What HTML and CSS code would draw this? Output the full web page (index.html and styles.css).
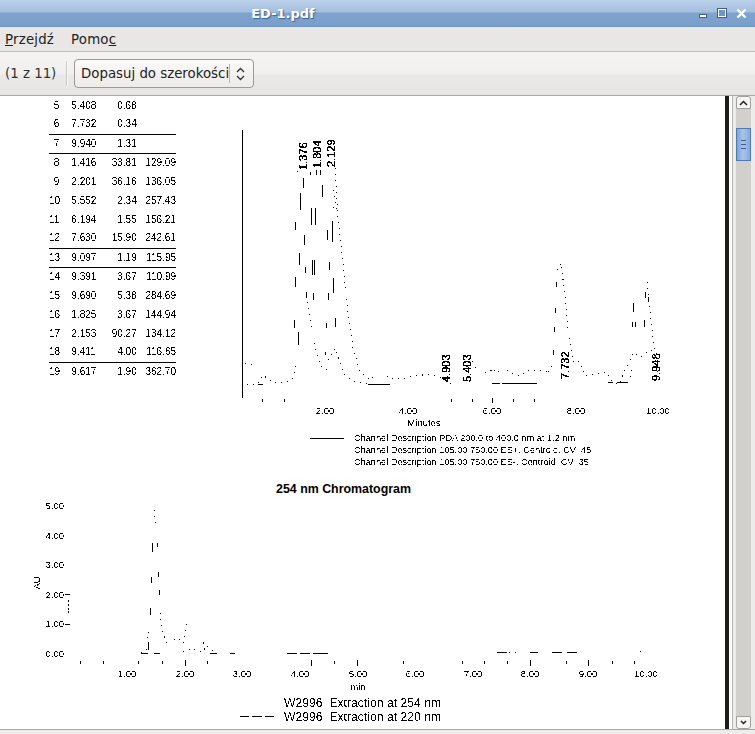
FILE: index.html
```html
<!DOCTYPE html>
<html lang="pl">
<head>
<meta charset="utf-8">
<title>ED-1.pdf</title>
<link rel="stylesheet" href="styles.css">
</head>
<body>
<svg class="defs" width="0" height="0" aria-hidden="true">
  <filter id="bin" x="0" y="0" width="100%" height="100%" color-interpolation-filters="sRGB">
    <feComponentTransfer><feFuncA type="discrete" tableValues="0 0 1 1"/></feComponentTransfer>
  </filter>
  <filter id="bin-heavy" x="0" y="0" width="100%" height="100%" color-interpolation-filters="sRGB">
    <feComponentTransfer><feFuncA type="discrete" tableValues="0 1 1 1"/></feComponentTransfer>
  </filter>
</svg>
<div class="window">
  <header class="titlebar">
    <span class="title">ED-1.pdf</span>
    <div class="wm">
      <span class="wm-min"></span>
      <span class="wm-max"></span>
      <svg class="wm-close" width="11" height="11" viewBox="0 0 11 11"><path d="M1.5 1.5l8 8M9.5 1.5l-8 8"/></svg>
    </div>
  </header>
  <nav class="menubar">
    <span><u>P</u>rzejdź</span>
    <span>Pomo<u>c</u></span>
  </nav>
  <div class="toolbar">
    <span class="pages">(1 z 11)</span>
    <span class="tool-sep"></span>
    <div class="combo">
      <span class="combo-text">Dopasuj do szerokości</span>
      <span class="combo-sep"></span>
      <svg class="combo-arrows" width="9" height="14" viewBox="0 0 9 14"><path d="M1 5l3.5-3.5L8 5M1 9l3.5 3.5L8 9"/></svg>
    </div>
  </div>
  <div class="content">
    <main class="page">
      <section class="upper">
        <table class="peaks">
          <tbody>
            <tr><td>5</td><td>5.408</td><td>0.68</td><td></td></tr>
            <tr class="ruled"><td>6</td><td>7.732</td><td>0.34</td><td></td></tr>
            <tr class="ruled"><td>7</td><td>9.940</td><td>1.31</td><td></td></tr>
            <tr><td>8</td><td>1.416</td><td>33.81</td><td>129.09</td></tr>
            <tr><td>9</td><td>2.201</td><td>36.16</td><td>136.05</td></tr>
            <tr><td>10</td><td>5.552</td><td>2.34</td><td>257.43</td></tr>
            <tr><td>11</td><td>6.194</td><td>1.55</td><td>156.21</td></tr>
            <tr class="ruled"><td>12</td><td>7.630</td><td>15.90</td><td>242.61</td></tr>
            <tr class="ruled"><td>13</td><td>9.097</td><td>1.19</td><td>115.95</td></tr>
            <tr><td>14</td><td>9.391</td><td>3.67</td><td>110.99</td></tr>
            <tr><td>15</td><td>9.690</td><td>5.38</td><td>284.69</td></tr>
            <tr><td>16</td><td>1.825</td><td>3.67</td><td>144.94</td></tr>
            <tr><td>17</td><td>2.153</td><td>90.27</td><td>134.12</td></tr>
            <tr class="ruled"><td>18</td><td>9.411</td><td>4.00</td><td>116.65</td></tr>
            <tr><td>19</td><td>9.617</td><td>1.90</td><td>362.70</td></tr>
          </tbody>
        </table>
        <svg class="chart chart-top" width="460" height="380" viewBox="240 96 460 380">
          <path class="solid" d="M242.5 130V398"/>
          <path class="solid" d="M262.5 399v3M284.5 399v3M451.5 399v3M472.5 399v3M492.5 398v5M513.5 399v3M534.5 399v3"/>
          <path class="solid" d="M294.5 320v8M298.5 332v13M295.5 222v8M300.5 193v17M303.5 178v10M304.5 235v10M299.5 253v12M305.5 267v6M306.5 292v6M311.5 208v17M315.5 208v17M312.5 260v15M314.5 260v15M313.5 293v7M310.5 172v3M316.5 170v5M320.5 170v5M322.5 185v12M327.5 230v10M329.5 262v8M332.5 221v21M333.5 278v15M328.5 293v7M335.5 318v9M326.5 323v5M325.5 352v3M295.5 277v10"/>
          <path class="solid" d="M368 384.5h22M258 384.5h5M492 383.5h8M502 383.5h35M608 382.5h5M617 382.5h11"/>
          <path class="solid" d="M554.5 327v5M555.5 308v5M556.5 282v5M553.5 350v5M632.5 322v5M633.5 303v9M635.5 322v5M644.5 320v7M645.5 292v6M648.5 297v5"/>
          <path class="dots" d="M245 363L252 365M247 385L258 384L263 375L272 382L285 383L293 378L296 362M297 172L301 160"/>
          <path class="dots" d="M335 168L338 218L343 262L348 315L353 348L360 372L370 380L378 372L390 378L405 378L415 376L430 374L442 378L452 384"/>
          <path class="dots" d="M307 302L313 338L320 365L327 370M328 360L335 348L345 375L355 382L368 384"/>
          <path class="dots" d="M333 190L337 210L331 205L328 200"/>
          <path class="dots" d="M470 356L476 368L481 372L490 372L493 368L497 373L503 367L510 372L518 376L530 370L540 370L548 372"/>
          <path class="dots" d="M548 372L553 365M557 270L561 263L565 296L568 333L571 349L573 362L577 360L580 362L585 376L598 374L606 372L612 382L620 384L625 370L634 352L640 357L650 350L660 356"/>
          <path class="dots" d="M647 282L651 320L655 357L658 373L655 380M630 377L632 370"/>
          <g class="rot-labels">
            <text transform="translate(307 170) rotate(-90)">1.376</text>
            <text transform="translate(321 168) rotate(-90)">1.804</text>
            <text transform="translate(335 167) rotate(-90)">2.129</text>
            <text transform="translate(450 382) rotate(-90)">4.903</text>
            <text transform="translate(471 382) rotate(-90)">5.403</text>
            <text transform="translate(569 379) rotate(-90)">7.732</text>
            <text transform="translate(660 381) rotate(-90)">9.948</text>
          </g>
          <g class="axis-labels">
            <text x="325" y="414">2.00</text>
            <text x="408" y="414">4.00</text>
            <text x="492" y="414">6.00</text>
            <text x="576" y="414">8.00</text>
            <text x="658" y="414">10.00</text>
            <text x="424" y="426">Minutes</text>
          </g>
          <path class="solid" d="M310 438.5h34"/>
          <g class="legend-small">
            <text x="354" y="441">Channel Description PDA 200.0 to 400.0 nm at 1.2 nm</text>
            <text x="354" y="453">Channel Description 105.00 750.00 ES+, Centroid, CV  45</text>
            <text x="354" y="465">Channel Description 105.00 750.00 ES-, Centroid, CV  35</text>
          </g>
        </svg>
      </section>
      <svg class="chart chart-bottom" width="725" height="253" viewBox="0 476 725 253">
        <text class="chart-title" x="343.5" y="493">254 nm Chromatogram</text>
        <g class="y-labels">
          <text x="64" y="509">5.00</text>
          <text x="64" y="539">4.00</text>
          <text x="64" y="568">3.00</text>
          <text x="64" y="598">2.00</text>
          <text x="64" y="627">1.00</text>
          <text x="64" y="657">0.00</text>
        </g>
        <text class="au" transform="translate(40 583) rotate(-90)">AU</text>
        <path class="solid" d="M65 594.5h5M65 624.5h5M68.5 600v2M68.5 604v2M68.5 608v2M68.5 611v2"/>
        <path class="solid" d="M80.5 661v3M103.5 661v3M138.5 661v3M162.5 661v3M185.5 660v6M207.5 661v3M311.5 660v6M334.5 661v3M357.5 660v6M403.5 661v3M462.5 661v3M484.5 661v3M507.5 661v3M530.5 660v6M566.5 661v3M588.5 660v6M612.5 661v3M634.5 661v3"/>
        <path class="solid" d="M141 653.5h7M154 653.5h6M210 653.5h7M230 653.5h5M287 653.5h10M300 653.5h10M313 653.5h15M497 652.5h10M530 652.5h8M552 652.5h10M567 652.5h10"/>
        <path class="solid" d="M148.5 642v8M150.5 608v7M151.5 577v6M152.5 543v9M158.5 572v5M159.5 590v5M157.5 543v4"/>
        <path class="dots" d="M141 653L146 651L149 629M154 510L156 525M160 613L163 633L167 645L172 642L176 638L180 640M183 643L186 625L188 620M183 652L192 649L200 652L205 650L202 640L208 647L215 652"/>
        <path class="dots" d="M497 652L520 652M640 652L645 650"/>
        <g class="axis-labels">
          <text x="127" y="677">1.00</text>
          <text x="185" y="677">2.00</text>
          <text x="242" y="677">3.00</text>
          <text x="300" y="677">4.00</text>
          <text x="358" y="677">5.00</text>
          <text x="415" y="677">6.00</text>
          <text x="473" y="677">7.00</text>
          <text x="530" y="677">8.00</text>
          <text x="588" y="677">9.00</text>
          <text x="646" y="677">10.00</text>
          <text x="358" y="690">min</text>
        </g>
        <g class="legend-big">
          <text x="284" y="707">W2996  Extraction at 254 nm</text>
          <text x="284" y="721">W2996  Extraction at 220 nm</text>
        </g>
        <path class="solid" d="M240 716.5h9M252 716.5h10M265 716.5h9"/>
      </svg>
    </main>
    <div class="page-edge"></div>
    <div class="scroll-gap"></div>
    <div class="scrollbar">
      <div class="sb-btn sb-up"><svg width="9" height="6" viewBox="0 0 9 6"><path d="M1 5l3.5-3.5L8 5"/></svg></div>
      <div class="sb-track">
        <div class="sb-thumb"><span></span><span></span><span></span></div>
      </div>
      <div class="sb-btn sb-down"><svg width="7" height="5" viewBox="0 0 7 5"><path d="M1 1l2.5 2.5L6 1"/></svg></div>
    </div>
  </div>
  <div class="bottom-strip"></div>
</div>
</body>
</html>
```
FILE: styles.css
```css
* { box-sizing: border-box; }
html, body { margin: 0; padding: 0; }
body { width: 755px; height: 734px; overflow: hidden; background: #edecea; font-family: "DejaVu Sans", sans-serif; font-size: 13.33px; color: #2e3436; }
.defs { position: absolute; }
.window { display: flex; flex-direction: column; width: 755px; height: 734px; }

.titlebar { position: relative; flex: 0 0 27px; display: flex; align-items: center; justify-content: center; padding-right: 189px; background: linear-gradient(#bbd0e9 0, #a4bfdf 12px, #7fa3cd 13px, #7a9fcb 25px, #6b93c4 27px); }
.title { color: #fff; font-weight: bold; font-size: 13px; text-shadow: 1px 1px 1px #3c5f8c; }
.wm { position: absolute; top: 8px; right: 8px; display: flex; align-items: flex-start; gap: 9px; }
.wm-min { width: 8px; height: 4px; margin-top: 6px; background: #fff; border: 1px solid #3f608d; }
.wm-max { width: 10px; height: 10px; border: 2px solid #fff; outline: 1px solid #3f608d; outline-offset: -1px; background: #6f96c7; margin-left: 1px; }
.wm-close path { stroke: #fff; stroke-width: 2.4; fill: none; }

.menubar { flex: 0 0 25px; display: flex; align-items: center; gap: 17px; padding: 0 5px; background: #e8e7e5; border-bottom: 1px solid #bfbdb9; color: #1f2223; letter-spacing: 0.2px; }

.toolbar { flex: 0 0 44px; display: flex; align-items: center; padding: 0 0 0 5px; background: linear-gradient(#f4f3f1 0, #f1f0ee 22px, #eae9e7 23px, #e7e6e4 100%); border-bottom: 1px solid #a9a8a4; }
.pages { width: 49px; flex: none; white-space: nowrap; }
.tool-sep { width: 1px; height: 25px; margin: 0 7px 0 12px; background: #c9c7c3; box-shadow: 1px 0 0 #fbfafa; }
.combo { width: 180px; height: 29px; display: flex; align-items: center; padding-left: 6px; background: linear-gradient(#fbfaf9, #ecebe9); border: 1px solid #9c9a94; border-radius: 4px; }
.combo-text { width: 148px; white-space: nowrap; color: #1f2223; }
.combo-sep { width: 1px; height: 19px; background: #b9b7b2; }
.combo-arrows { margin-left: 6px; }
.combo-arrows path { fill: none; stroke: #2e3436; stroke-width: 1.3; }

.content { flex: 0 0 633px; display: flex; }
.page { width: 725px; height: 633px; background: #fff; overflow: hidden; display: flex; flex-direction: column; }
.page-edge { width: 4px; background: #1c1c1c; }
.scroll-gap { width: 7px; background: linear-gradient(90deg, #fff 0 3px, #b9b8b4 3px 4px, #edecea 4px); }
.scrollbar { width: 15px; display: flex; flex-direction: column; margin-right: 4px; }
.sb-btn { height: 13px; display: flex; align-items: center; justify-content: center; background: #f6f5f4; border: 1px solid #a3a19c; }
.sb-up { border-radius: 3px 3px 0 0; }
.sb-down { border-radius: 0 0 3px 3px; }
.sb-btn path { fill: none; stroke: #1f2223; stroke-width: 1.5; }
.sb-track { flex: 1; background: #d2d0cd; padding-top: 19px; }
.sb-thumb { height: 33px; display: flex; flex-direction: column; align-items: center; justify-content: center; gap: 3px; background: linear-gradient(90deg, #7ca2d4, #a9c4e9 45%, #86a9da); border: 1px solid #4f7bb3; }
.sb-thumb span { width: 5px; height: 1px; background: #3d5f8f; }
.bottom-strip { flex: 0 0 5px; background: #edecea; border-top: 1px solid #a9a8a4; }

.upper { flex: 0 0 380px; display: flex; align-items: flex-start; }
.peaks { width: 127px; margin-left: 49px; border-collapse: collapse; table-layout: fixed; font-family: "Liberation Sans", sans-serif; font-size: 10px; color: #000; filter: url(#bin); }
.peaks td { height: 19px; padding: 0; line-height: 10px; text-align: right; white-space: nowrap; }
.peaks td:nth-child(1) { width: 10px; }
.peaks td:nth-child(2) { width: 33px; padding-left: 12px; text-align: left; }
.peaks td:nth-child(3) { width: 42px; }
.peaks td:nth-child(4) { width: 38px; }
.peaks tr.ruled td { border-bottom: 1px solid #000; }
.chart { display: block; flex: none; }
.chart-top { margin-left: 64px; }
.solid { stroke: #000; stroke-width: 1; fill: none; shape-rendering: crispEdges; }
.dots { stroke: #000; stroke-width: 1; fill: none; stroke-dasharray: 1 5; shape-rendering: crispEdges; }
.chart text { font-family: "Liberation Sans", sans-serif; fill: #000; white-space: pre; }
.axis-labels, .legend-small, .y-labels, .au, .legend-big { filter: url(#bin); }
.rot-labels { filter: url(#bin-heavy); }
.rot-labels text { font-size: 11px; }
.axis-labels text { font-size: 9.5px; text-anchor: middle; }
.legend-small text { font-size: 9.2px; }
.y-labels text { font-size: 9.5px; text-anchor: end; }
.au { font-size: 9.5px; text-anchor: middle; }
.legend-big text { font-size: 12.2px; }
.chart .chart-title { font-size: 12.4px; font-weight: bold; text-anchor: middle; }
```
